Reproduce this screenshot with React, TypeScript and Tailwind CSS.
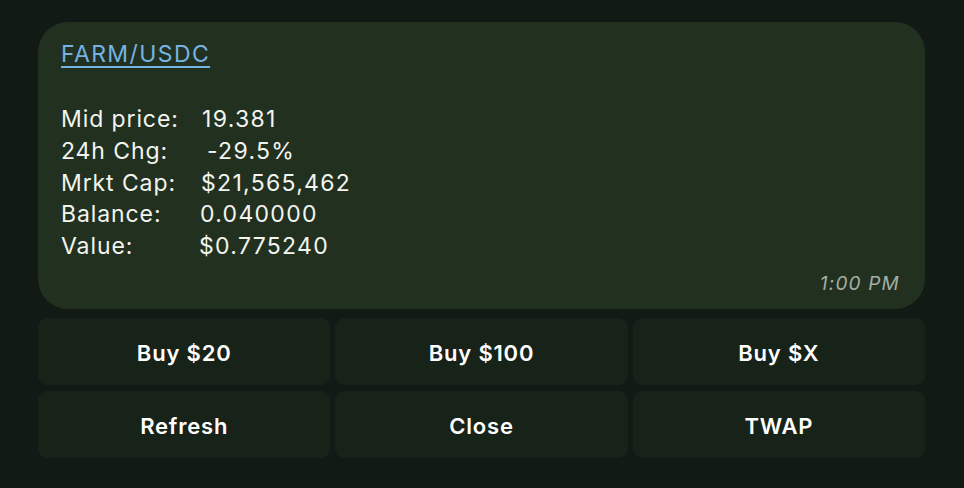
const rows: { label: string; value: string; offset: string }[] = [
  { label: "Mid price:", value: "19.381", offset: "ml-[2px]" },
  { label: "24h Chg:", value: "-29.5%", offset: "ml-[7px]" },
  { label: "Mrkt Cap:", value: "$21,565,462", offset: "ml-[1px]" },
  { label: "Balance:", value: "0.040000", offset: "ml-0" },
  { label: "Value:", value: "$0.775240", offset: "-ml-[1px]" },
];

const buttons = ["Buy $20", "Buy $100", "Buy $X", "Refresh", "Close", "TWAP"];

export default function App() {
  return (
    <div className="w-[964px] h-[488px] bg-[#111a14] pt-[22px] pl-[38px] font-['Inter',sans-serif] overflow-hidden">
      <div className="w-[887px]">
        {/* message bubble */}
        <div className="h-[287px] rounded-[30px] bg-[#22301f] pl-[23px] pr-[25px] pt-[38px] flex flex-col">
          <a className="text-[23px] leading-[32px] tracking-[1.4px] text-[#74b3e2] underline underline-offset-[4px] decoration-[2px] self-start -mt-[22px]">
            FARM/USDC
          </a>
          <div className="mt-[34px] text-[23px] leading-[31.8px] tracking-[0.9px] text-[#f2f4f0]">
            {rows.map((r) => (
              <div key={r.label} className="flex">
                <span className="w-[139px]">{r.label}</span>
                <span className={`${r.offset} tracking-[1.3px]`}>{r.value}</span>
              </div>
            ))}
          </div>
          <div className="mt-auto mb-[13px] self-end text-[19px] italic tracking-[1.2px] text-[#a3aea5] leading-[24px]">
            1:00 PM
          </div>
        </div>

        {/* inline keyboard */}
        <div className="grid grid-cols-3 gap-x-[5px] gap-y-[6px] mt-[9px]">
          {buttons.map((b) => (
            <button
              key={b}
              className="h-[67px] pt-[3px] rounded-[9px] bg-[#172219] text-white text-[22px] font-semibold tracking-[0.8px]"
            >
              {b}
            </button>
          ))}
        </div>
      </div>
    </div>
  );
}
